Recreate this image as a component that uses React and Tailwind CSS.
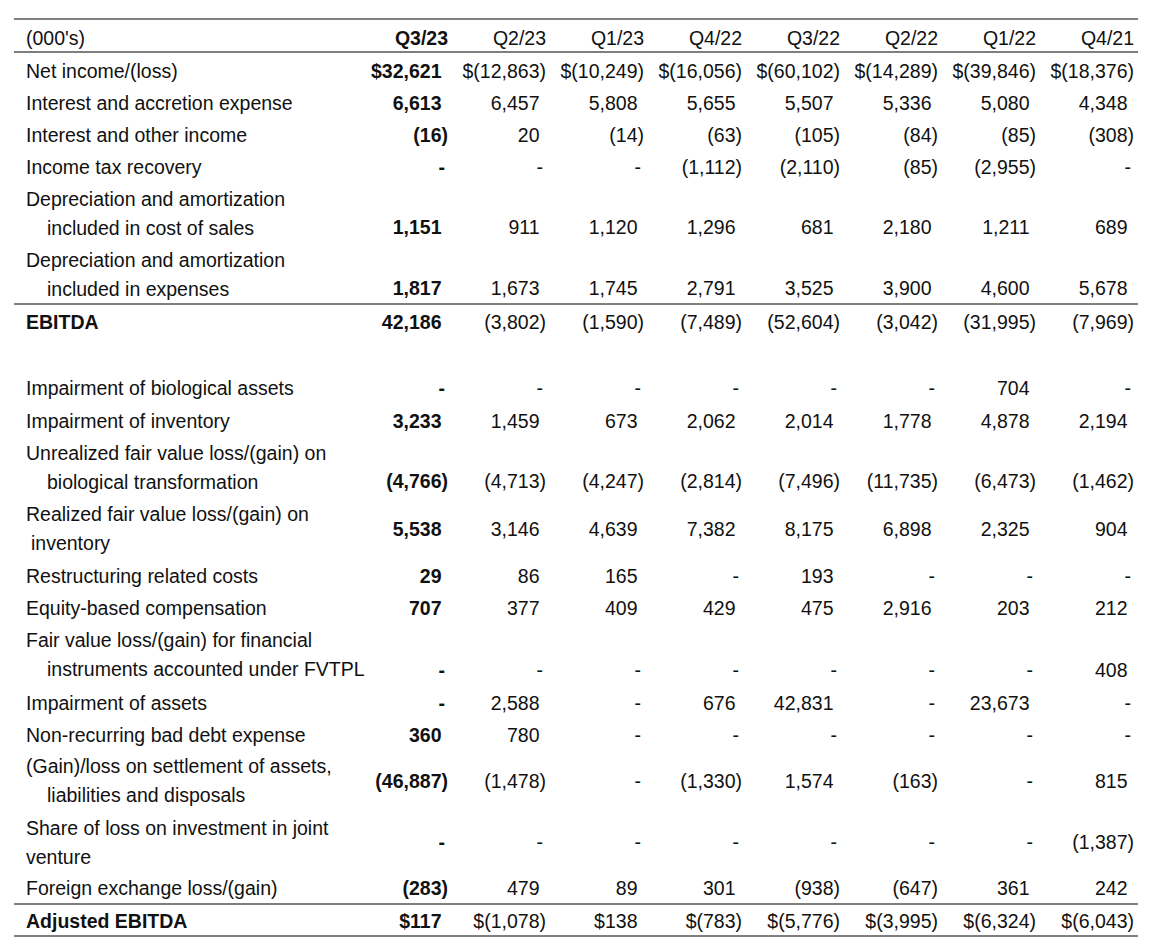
const rows = [
  { label: ["Net income/(loss)"], v: ["$32,621", "$(12,863)", "$(10,249)", "$(16,056)", "$(60,102)", "$(14,289)", "$(39,846)", "$(18,376)"] },
  { label: ["Interest and accretion expense"], v: ["6,613", "6,457", "5,808", "5,655", "5,507", "5,336", "5,080", "4,348"] },
  { label: ["Interest and other income"], v: ["(16)", "20", "(14)", "(63)", "(105)", "(84)", "(85)", "(308)"] },
  { label: ["Income tax recovery"], v: ["-", "-", "-", "(1,112)", "(2,110)", "(85)", "(2,955)", "-"] },
  { label: ["Depreciation and amortization", "included in cost of sales"], h: "h-[61px]", align: "end", v: ["1,151", "911", "1,120", "1,296", "681", "2,180", "1,211", "689"] },
  { label: ["Depreciation and amortization", "included in expenses"], h: "h-[61px]", align: "end", v: ["1,817", "1,673", "1,745", "2,791", "3,525", "3,900", "4,600", "5,678"] },
  { label: ["EBITDA"], bold: true, line: true, pt: "pt-[3px]", v: ["42,186", "(3,802)", "(1,590)", "(7,489)", "(52,604)", "(3,042)", "(31,995)", "(7,969)"] },
  { spacer: true },
  { label: ["Impairment of biological assets"], h: "h-[33px]", v: ["-", "-", "-", "-", "-", "-", "704", "-"] },
  { label: ["Impairment of inventory"], v: ["3,233", "1,459", "673", "2,062", "2,014", "1,778", "4,878", "2,194"] },
  { label: ["Unrealized fair value loss/(gain) on", "biological transformation"], h: "h-[61px]", align: "end", v: ["(4,766)", "(4,713)", "(4,247)", "(2,814)", "(7,496)", "(11,735)", "(6,473)", "(1,462)"] },
  { label: ["Realized fair value loss/(gain) on", "inventory"], h: "h-[62px]", small: true, align: "center", v: ["5,538", "3,146", "4,639", "7,382", "8,175", "6,898", "2,325", "904"] },
  { label: ["Restructuring related costs"], v: ["29", "86", "165", "-", "193", "-", "-", "-"] },
  { label: ["Equity-based compensation"], v: ["707", "377", "409", "429", "475", "2,916", "203", "212"] },
  { label: ["Fair value loss/(gain) for financial", "instruments accounted under FVTPL"], h: "h-[63px]", align: "end", v: ["-", "-", "-", "-", "-", "-", "-", "408"] },
  { label: ["Impairment of assets"], v: ["-", "2,588", "-", "676", "42,831", "-", "23,673", "-"] },
  { label: ["Non-recurring bad debt expense"], h: "h-[31px]", v: ["360", "780", "-", "-", "-", "-", "-", "-"] },
  { label: ["(Gain)/loss on settlement of assets,", "liabilities and disposals"], h: "h-[62px]", align: "center", v: ["(46,887)", "(1,478)", "-", "(1,330)", "1,574", "(163)", "-", "815"] },
  { label: ["Share of loss on investment in joint", "venture"], h: "h-[60px]", none: true, align: "center", v: ["-", "-", "-", "-", "-", "-", "-", "(1,387)"] },
  { label: ["Foreign exchange loss/(gain)"], h: "h-[33px]", v: ["(283)", "479", "89", "301", "(938)", "(647)", "361", "242"] },
  { label: ["Adjusted EBITDA"], bold: true, line: true, last: true, h: "h-[34px]", pt: "pt-[2px]", v: ["$117", "$(1,078)", "$138", "$(783)", "$(5,776)", "$(3,995)", "$(6,324)", "$(6,043)"] },
];

const heads = ["Q3/23", "Q2/23", "Q1/23", "Q4/22", "Q3/22", "Q2/22", "Q1/22", "Q4/21"];

const Num = ({ value, bold }) => {
  if (value === "-") return <span className={`pr-[3px] ${bold ? "font-bold" : ""}`}>-</span>;
  const closed = value.endsWith(")");
  return (
    <span className={bold ? "font-bold" : ""}>
      {value}
      {!closed && <span className="invisible">)</span>}
    </span>
  );
};

const Row = ({ row }) => {
  if (row.spacer) return <div className="col-span-9 h-[35px]" />;
  const alignClass = row.align === "end" ? "items-end" : row.align === "center" ? "items-center" : "items-start";
  const edge = row.line ? "border-t-2 border-[#7f7f7f]" : "";
  const bottom = row.last ? "border-b-2 border-[#7f7f7f]" : "";
  const h = row.h || "h-[32px]";
  const pt = row.pt || "pt-[4px]";
  return (
    <>
      <div className={`pl-[12px] ${pt} ${h} flex flex-col whitespace-nowrap ${edge} ${bottom} ${row.bold ? "font-bold" : ""}`}>
        {row.label.map((t, i) => (
          <span key={i} className={i === 0 ? "" : row.none ? "" : row.small ? "pl-[5px]" : "pl-[21px]"}>
            {t}
          </span>
        ))}
      </div>
      {row.v.map((val, i) => (
        <div key={i} className={`${pt} ${h} pr-[4px] flex justify-end ${alignClass} ${edge} ${bottom}`}>
          <Num value={val} bold={i === 0} />
        </div>
      ))}
    </>
  );
};

export default function App() {
  return (
    <div className="w-[1157px] h-[952px] bg-white pt-[18px] pl-[14px] text-[#111] text-[19.5px] leading-[29px]" style={{ fontFamily: '"Liberation Sans", Arial, sans-serif' }}>
      <div className="grid grid-cols-[340px_repeat(8,98px)] w-[1124px] border-t-2 border-[#7f7f7f]">
        <div className="pl-[12px] pt-[4px] h-[33px] border-b-2 border-[#7f7f7f]">(000's)</div>
        {heads.map((h, i) => (
          <div key={h} className={`pt-[4px] pr-[4px] h-[33px] text-right border-b-2 border-[#7f7f7f] ${i === 0 ? "font-bold" : ""}`}>
            {h}
          </div>
        ))}
        {rows.map((r, i) => (
          <Row key={i} row={r} />
        ))}
      </div>
    </div>
  );
}
